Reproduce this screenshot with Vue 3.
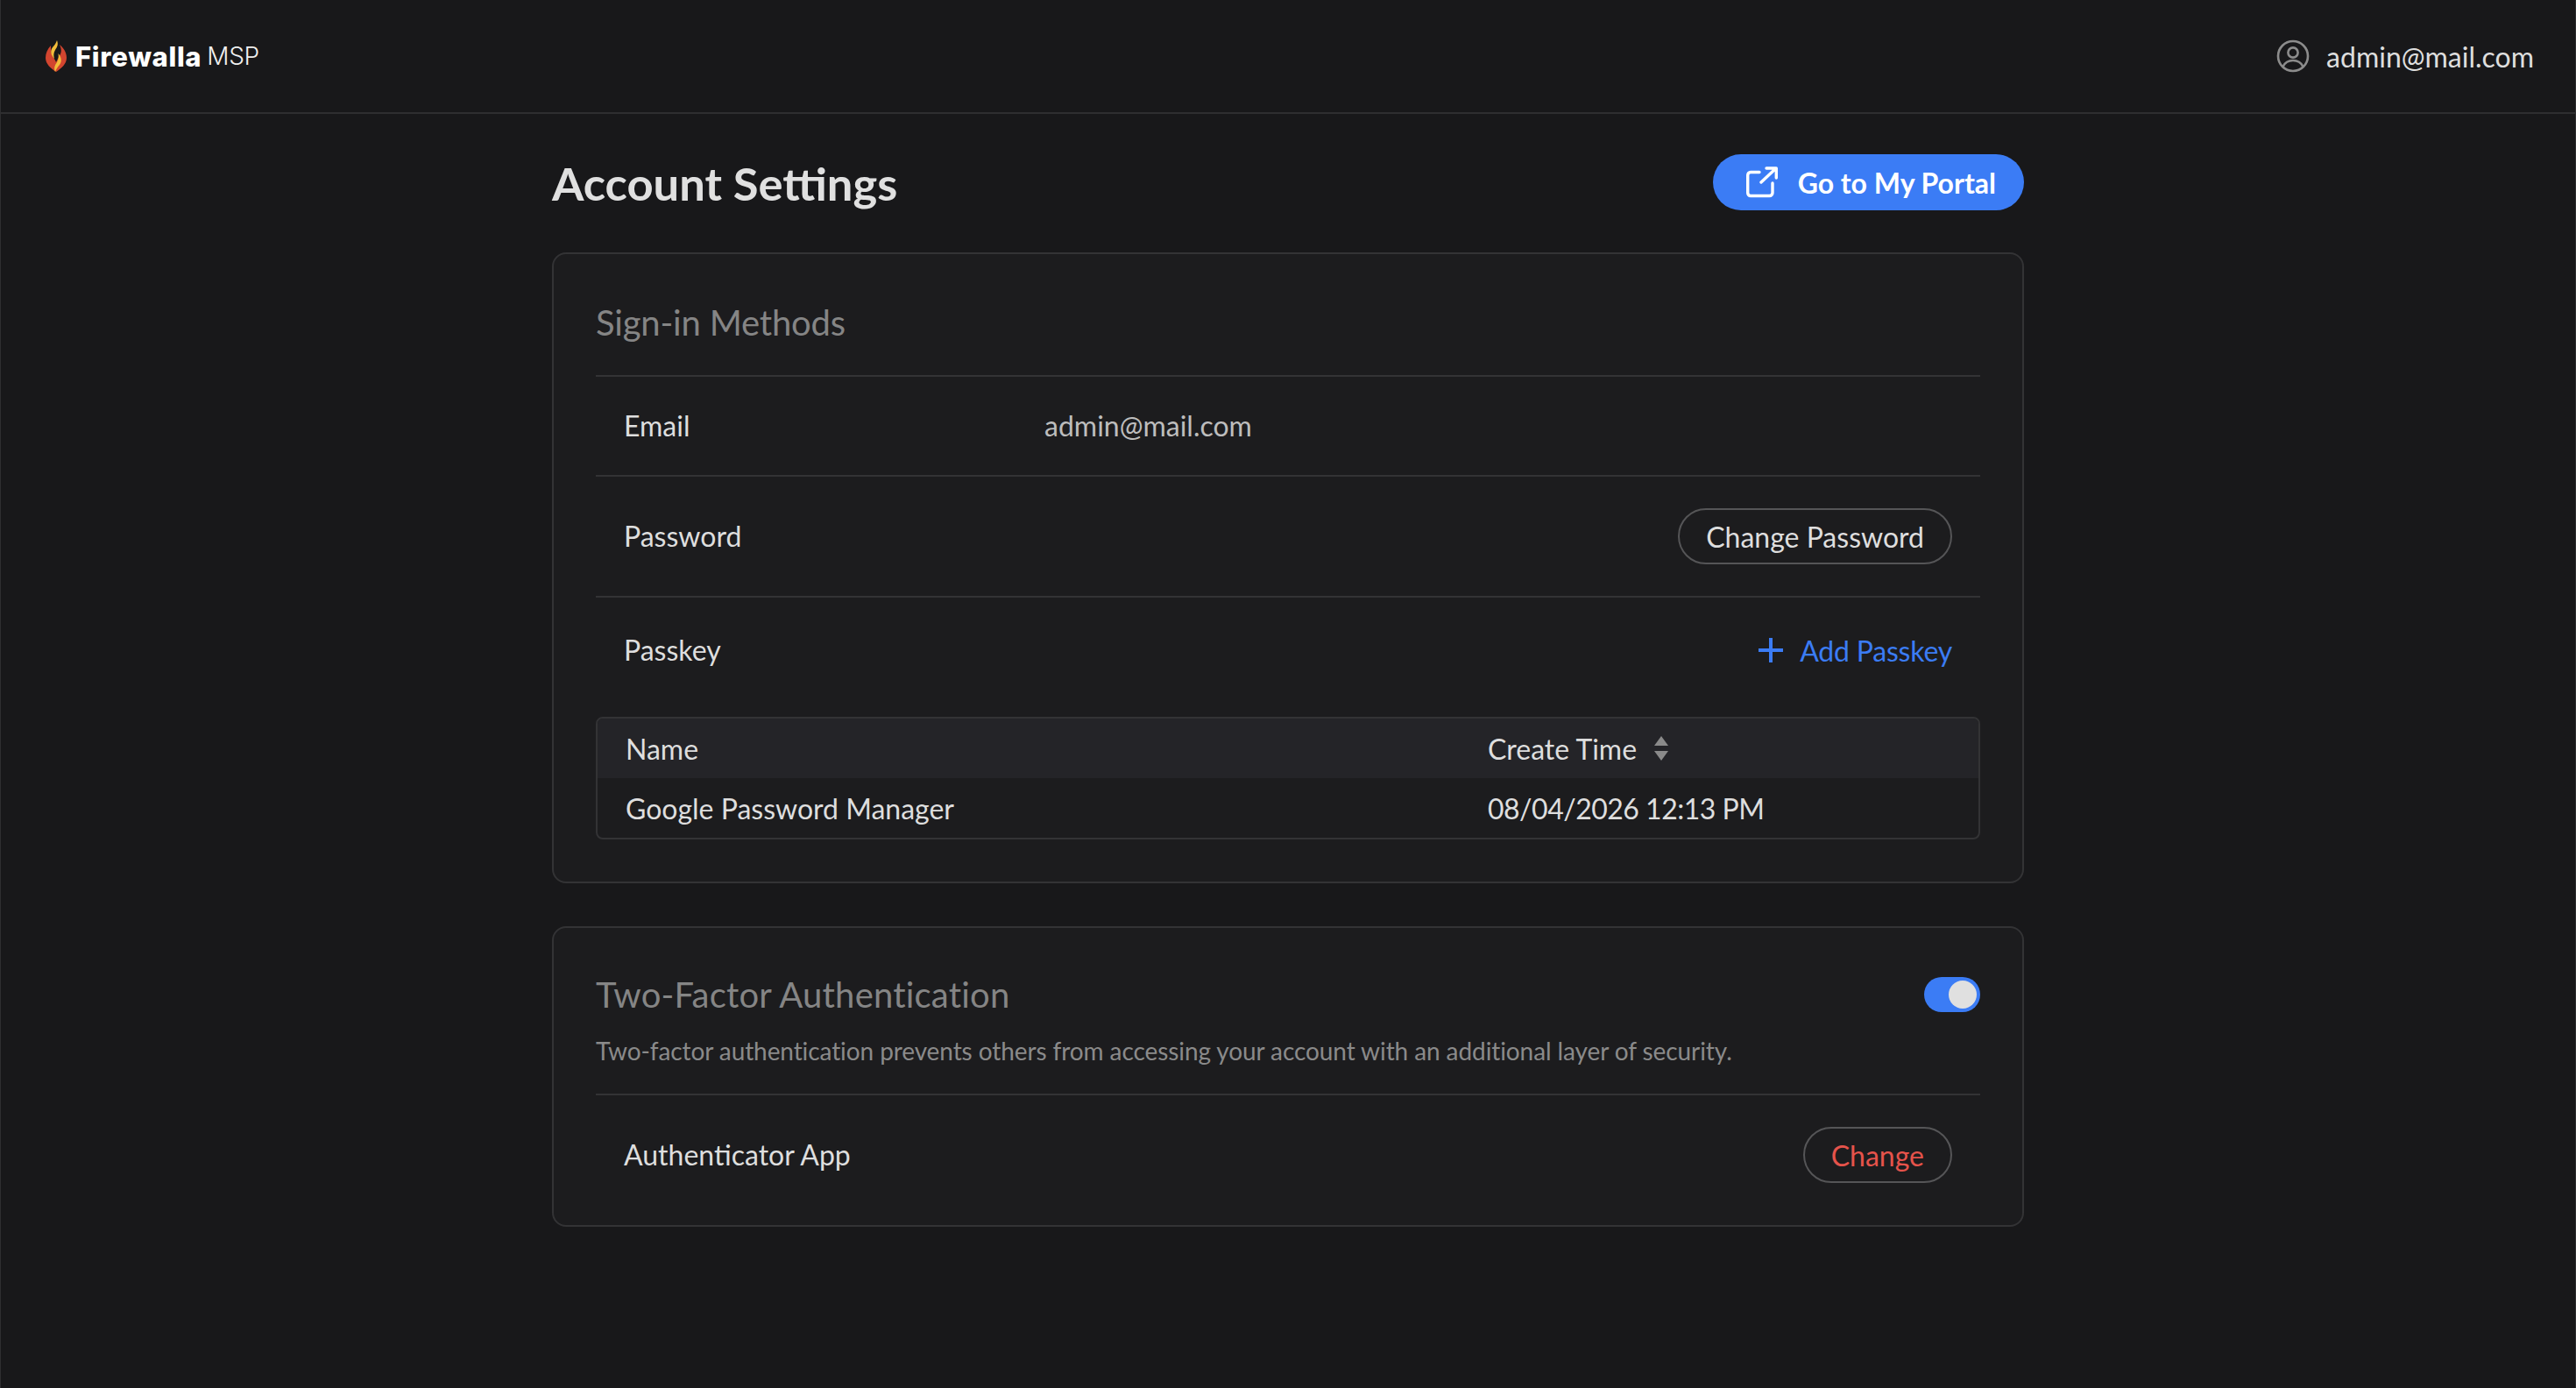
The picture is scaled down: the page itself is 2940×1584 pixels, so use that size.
<template>
  <div class="page">
    <header class="topbar">
      <div class="brand">
        <svg class="flame" width="24" height="36" viewBox="0 0 24 36">
          <path d="M6 6C2 10 0 15 0 20C0 27 6 32 12 36C18 32 24 27 24 20C24 14 21 9 16 5C19 11 18 15 15 19C14 21 13 23 12 25C11 22 9 20 8 18C6 14 6 10 6 6Z" fill="#d2452f" />
          <path d="M13 0C15 5 13 8 11 11C9 14 9 18 10 21C6 17 5 12 8 8C10 6 12 3 13 0Z" fill="#f2bd3a" />
          <path d="M11 36C9 31 11 28 13 25C15 22 15 18 14.500 15C18 19 19 24 16 28C14 30 12 33 11 36Z" fill="#f2bd3a" />
        </svg>
        <span class="brand-name">Firewalla</span>
        <span class="brand-tag">MSP</span>
      </div>
      <div class="user">
        <svg width="38" height="38" viewBox="0 0 38 38" fill="none" stroke="#8c8c8c" stroke-width="2.6">
          <circle cx="19" cy="19" r="17" />
          <circle cx="19" cy="15" r="5.6" />
          <path d="M7.500 31C10 26 14 24 19 24C24 24 28 26 30.500 31" />
        </svg>
        <span>admin@mail.com</span>
      </div>
    </header>

    <main class="content">
      <div class="title-row">
        <h1>Account Settings</h1>
        <button class="portal-btn">
          <svg width="36" height="36" viewBox="0 0 36 36" fill="none" stroke="#fff" stroke-width="3.4" stroke-linecap="round" stroke-linejoin="round">
            <path d="M15 6.500H5C3 6.500 1.700 8 1.700 10V30C1.700 32 3 33.500 5 33.500H26.500C28.500 33.500 30 32 30 30V19" />
            <path d="M17 18L34 2M23 2H34.300V13" />
          </svg>
          Go to My Portal
        </button>
      </div>

      <section class="card first-card">
        <h2 class="card-title signin-title">Sign-in Methods</h2>
        <div class="row email-row">
          <span class="row-label">Email</span>
          <span class="email-value">admin@mail.com</span>
        </div>
        <div class="row">
          <span>Password</span>
          <button class="pill">Change Password</button>
        </div>
        <div class="row passkey-row">
          <span>Passkey</span>
          <button class="add-btn">
            <svg width="28" height="28" viewBox="0 0 28 28" stroke="#3b7cf5" stroke-width="4">
              <path d="M14 0V28M0 14H28" />
            </svg>
            Add Passkey
          </button>
        </div>
        <div class="table">
          <div class="table-row table-head">
            <span>Name</span>
            <span class="time-col">
              Create Time
              <svg width="16" height="28" viewBox="0 0 16 28" fill="#8a8a8a">
                <path d="M8 0L16 11H0Z" />
                <path d="M0 17H16L8 28Z" />
              </svg>
            </span>
          </div>
          <div class="table-row" v-for="key in passkeys" :key="key.name">
            <span>{{ key.name }}</span>
            <span class="time-col date-cell">{{ key.created }}</span>
          </div>
        </div>
      </section>

      <section class="card">
        <div class="tfa-head">
          <h2 class="card-title tfa-title">Two-Factor Authentication</h2>
          <div class="toggle"><div class="knob"></div></div>
        </div>
        <p class="desc">Two-factor authentication prevents others from accessing your account with an additional layer of security.</p>
        <div class="row auth-row">
          <span>Authenticator App</span>
          <button class="pill danger">Change</button>
        </div>
      </section>
    </main>
  </div>
</template>

<script setup>
const passkeys = [
  { name: 'Google Password Manager', created: '08/04/2026 12:13 PM' }
]
</script>

<style>
html, body {
  background: #18181a;
}
</style>

<style scoped>
.page {
  min-height: 1584px;
  box-sizing: border-box;
  background: #18181a;
  color: #dedede;
  font-family: Lato, "Liberation Sans", sans-serif;
  font-size: 32px;
  border-left: 1px solid #2e2e30;
  border-right: 1px solid #2e2e30;
}

.topbar {
  height: 130px;
  box-sizing: border-box;
  border-bottom: 2px solid #2e2e30;
  padding: 0 47px 0 51px;
  display: flex;
  align-items: center;
  justify-content: space-between;
}

.brand {
  display: flex;
  align-items: center;
  color: #fff;
}

.flame {
  margin-right: 10px;
}

.brand-name {
  font-family: Inter, sans-serif;
  font-weight: 800;
  font-size: 31px;
  letter-spacing: 0.7px;
}

.brand-tag {
  font-family: Inter, sans-serif;
  font-weight: 300;
  font-size: 28px;
  margin-left: 6px;
  letter-spacing: -0.3px;
  color: #f0f0f0;
}

.user {
  display: flex;
  align-items: center;
  gap: 19px;
}

.content {
  width: 1680px;
  margin: 0 auto;
  padding-top: 46px;
}

.title-row {
  display: flex;
  align-items: center;
  justify-content: space-between;
  height: 64px;
  margin-bottom: 48px;
}

h1 {
  margin: 0;
  font-size: 52.5px;
  font-weight: 700;
  color: #e0e0e0;
}

.portal-btn {
  height: 64px;
  border: none;
  border-radius: 32px;
  background: #3b7cf5;
  color: #fff;
  font: 700 32px Lato, sans-serif;
  padding: 0 32px 0 38px;
  display: flex;
  align-items: center;
  gap: 23px;
}

.card {
  background: #1c1c1e;
  border: 2px solid #333335;
  border-radius: 16px;
  padding: 48px;
  margin-bottom: 48px;
}

.first-card {
  margin-bottom: 49px;
}

.card-title {
  margin: 0;
  font-size: 40px;
  font-weight: 400;
  line-height: 60px;
  color: #858585;
}

.signin-title {
  margin-bottom: 30px;
  letter-spacing: -0.2px;
}

.tfa-title {
  line-height: 56px;
  letter-spacing: 0.2px;
}

.row {
  display: flex;
  align-items: center;
  justify-content: space-between;
  padding: 36px 32px;
  border-top: 2px solid #333335;
  line-height: 40px;
}

.email-row {
  justify-content: flex-start;
}

.row-label {
  width: 480px;
}

.email-value {
  color: #bdbdbd;
}

.passkey-row {
  padding: 40px 32px 56px;
}

.pill {
  height: 64px;
  box-sizing: border-box;
  border: 2px solid #555557;
  border-radius: 32px;
  background: transparent;
  color: #dedede;
  font: 400 32px Lato, sans-serif;
  padding: 0 30px;
}

.danger {
  color: #e5534b;
}

.add-btn {
  background: none;
  border: none;
  padding: 0;
  color: #3b7cf5;
  font: 400 32px Lato, sans-serif;
  letter-spacing: -0.2px;
  display: flex;
  align-items: center;
  gap: 19px;
}

.table {
  border: 2px solid #333335;
  border-radius: 8px;
  overflow: hidden;
}

.table-row {
  display: grid;
  grid-template-columns: 984px 1fr;
  align-items: center;
  height: 68px;
  padding: 0 32px;
}

.table-head {
  background: #242428;
}

.time-col {
  display: flex;
  align-items: center;
  gap: 20px;
}

.date-cell {
  letter-spacing: -0.5px;
}

.tfa-head {
  display: flex;
  align-items: center;
  justify-content: space-between;
}

.toggle {
  width: 64px;
  height: 40px;
  border-radius: 20px;
  background: #3b7cf5;
  display: flex;
  align-items: center;
  justify-content: flex-end;
  padding-right: 4px;
  box-sizing: border-box;
}

.knob {
  width: 32px;
  height: 32px;
  border-radius: 50%;
  background: #e0e0e0;
}

.desc {
  margin: 16px 0 29px;
  font-size: 28px;
  line-height: 40px;
  letter-spacing: -0.09px;
  color: #8a8a8a;
}

.auth-row {
  padding-bottom: 0;
}
</style>
